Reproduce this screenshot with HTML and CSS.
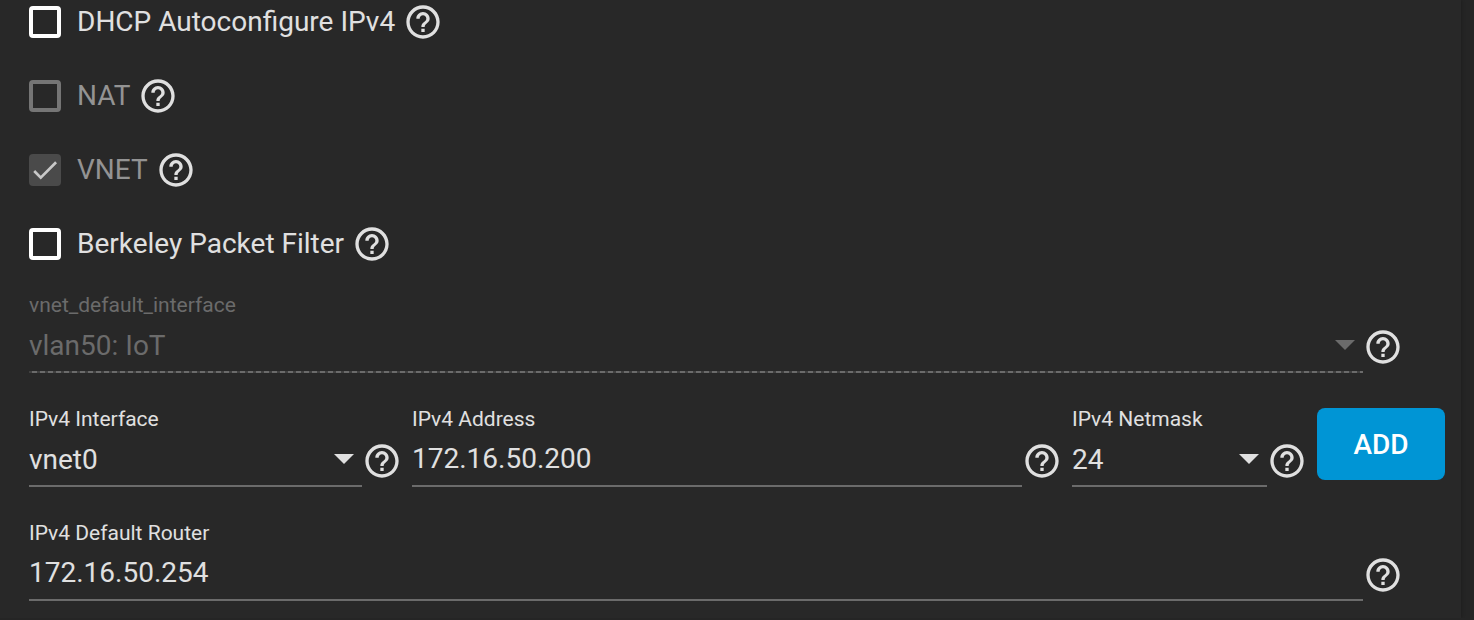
FILE: index.html
```html
<!DOCTYPE html>
<html lang="en">
<head>
    <meta charset="UTF-8">
    <meta name="viewport" content="width=device-width, initial-scale=1.0">
    <title>Jail Network Settings</title>
    <link rel="stylesheet" href="styles.css">
</head>

<body>
    <svg class="sprite" aria-hidden="true">
        <symbol id="help" viewBox="0 0 24 24">
            <path d="M11 18h2v-2h-2v2zm1-16C6.480 2 2 6.480 2 12s4.480 10 10 10 10-4.480 10-10S17.520 2 12 2zm0 18c-4.410 0-8-3.590-8-8s3.590-8 8-8 8 3.590 8 8-3.590 8-8 8zm0-14c-2.210 0-4 1.790-4 4h2c0-1.100.9-2 2-2s2 .9 2 2c0 2-3 1.750-3 5h2c0-2.250 3-2.500 3-5 0-2.210-1.790-4-4-4z"/>
        </symbol>
    </svg>

    <form class="card">
        <div class="checks">
            <div class="check-row">
                <label class="check"><input type="checkbox" name="dhcp"> DHCP Autoconfigure IPv4</label>
                <svg class="help"><use href="#help"/></svg>
            </div>
            <div class="check-row">
                <label class="check disabled"><input type="checkbox" name="nat" disabled> NAT</label>
                <svg class="help"><use href="#help"/></svg>
            </div>
            <div class="check-row">
                <label class="check disabled">
                    <span class="box">
                        <input type="checkbox" name="vnet" checked disabled>
                        <svg class="tick" viewBox="0 0 24 24"><path d="M3.900 12.800 8.800 17.700 20.300 6.200"/></svg>
                    </span>
                    VNET
                </label>
                <svg class="help"><use href="#help"/></svg>
            </div>
            <div class="check-row">
                <label class="check"><input type="checkbox" name="bpf"> Berkeley Packet Filter</label>
                <svg class="help"><use href="#help"/></svg>
            </div>
        </div>

        <div class="field-row narrow">
            <div class="field disabled">
                <label for="vnetDefault">vnet_default_interface</label>
                <select id="vnetDefault" disabled>
                    <option>vlan50: IoT</option>
                </select>
                <span class="arrow"></span>
            </div>
            <svg class="help"><use href="#help"/></svg>
        </div>

        <div class="address-row">
            <div class="field-row">
                <div class="field">
                    <label for="ipInterface">IPv4 Interface</label>
                    <select id="ipInterface">
                        <option>vnet0</option>
                    </select>
                    <span class="arrow"></span>
                </div>
                <svg class="help"><use href="#help"/></svg>
            </div>
            <div class="field-row">
                <div class="field">
                    <label for="ipAddress">IPv4 Address</label>
                    <input type="text" id="ipAddress" value="172.16.50.200">
                </div>
                <svg class="help"><use href="#help"/></svg>
            </div>
            <div class="field-row">
                <div class="field">
                    <label for="netmask">IPv4 Netmask</label>
                    <select id="netmask">
                        <option>24</option>
                    </select>
                    <span class="arrow"></span>
                </div>
                <svg class="help"><use href="#help"/></svg>
            </div>
            <button type="button">ADD</button>
        </div>

        <div class="field-row narrow">
            <div class="field">
                <label for="router">IPv4 Default Router</label>
                <input type="text" id="router" value="172.16.50.254">
            </div>
            <svg class="help"><use href="#help"/></svg>
        </div>
    </form>
</body>
</html>
```

FILE: styles.css
```css
* {
    box-sizing: border-box;
}

body {
    margin: 0;
    background-color: #252525;
    color: #e0e0e0;
    font-family: Roboto, "Liberation Sans", sans-serif;
    font-size: 28px;
}

.sprite {
    display: none;
}

.card {
    display: flex;
    flex-direction: column;
    gap: 34px;
    margin-right: 13px;
    padding: 2px 16px 17px 29px;
    background-color: #282828;
    box-shadow: 0 0 4px rgba(0, 0, 0, 0.3);
}

.checks {
    display: flex;
    flex-direction: column;
    gap: 34px;
    margin-bottom: -5px;
}

.check-row {
    display: flex;
    align-items: center;
    gap: 8px;
}

.check {
    display: flex;
    align-items: center;
    gap: 16px;
    line-height: 40px;
}

.check.disabled {
    color: #939393;
}

input[type="checkbox"] {
    appearance: none;
    width: 32px;
    height: 32px;
    margin: 0;
    border: 4px solid #fff;
    border-radius: 4px;
}

input[type="checkbox"]:disabled {
    border-color: #757575;
}

input[type="checkbox"]:disabled:checked {
    border: none;
    background-color: #4a4a4a;
}

.box {
    display: flex;
    position: relative;
}

.tick {
    position: absolute;
    inset: 0;
    fill: none;
    stroke: #c8c8c8;
    stroke-width: 2;
}

.help {
    flex: none;
    width: 40px;
    height: 40px;
    fill: #e0e0e0;
}

.field-row {
    display: flex;
    align-items: flex-end;
}

.field-row .help {
    margin-bottom: 6px;
}

.narrow {
    margin-right: 42px;
}

.field {
    display: flex;
    flex: 1;
    flex-direction: column;
    gap: 2px;
    min-width: 0;
    position: relative;
}

.field label {
    font-size: 21px;
    line-height: 24px;
}

.field select,
.field input {
    appearance: none;
    width: 100%;
    height: 54px;
    margin: 0;
    padding: 0;
    border: none;
    border-bottom: 2px solid #6b6b6b;
    border-radius: 0;
    outline: none;
    background-color: transparent;
    color: inherit;
    font: inherit;
}

.field input {
    padding-bottom: 2px;
}

.field.disabled {
    color: #6b6b6b;
}

.field.disabled select {
    border-bottom: none;
    background: repeating-linear-gradient(to right, #404040 0 3px, #6b6b6b 3px 8px) bottom / 100% 2px no-repeat;
    padding-bottom: 2px;
    opacity: 1;
}

.arrow {
    position: absolute;
    right: 8px;
    bottom: 23px;
    border: 10px solid transparent;
    border-top-color: currentColor;
    border-bottom: none;
    pointer-events: none;
}

.address-row {
    display: grid;
    grid-template-columns: 373fr 650fr 235fr 128px;
    align-items: center;
    gap: 10px;
}

button {
    height: 72px;
    margin: 0 0 6px;
    border: none;
    border-radius: 8px;
    background-color: #0095d5;
    color: #fff;
    font: 500 28px Roboto, "Liberation Sans", sans-serif;
    cursor: pointer;
}
```
